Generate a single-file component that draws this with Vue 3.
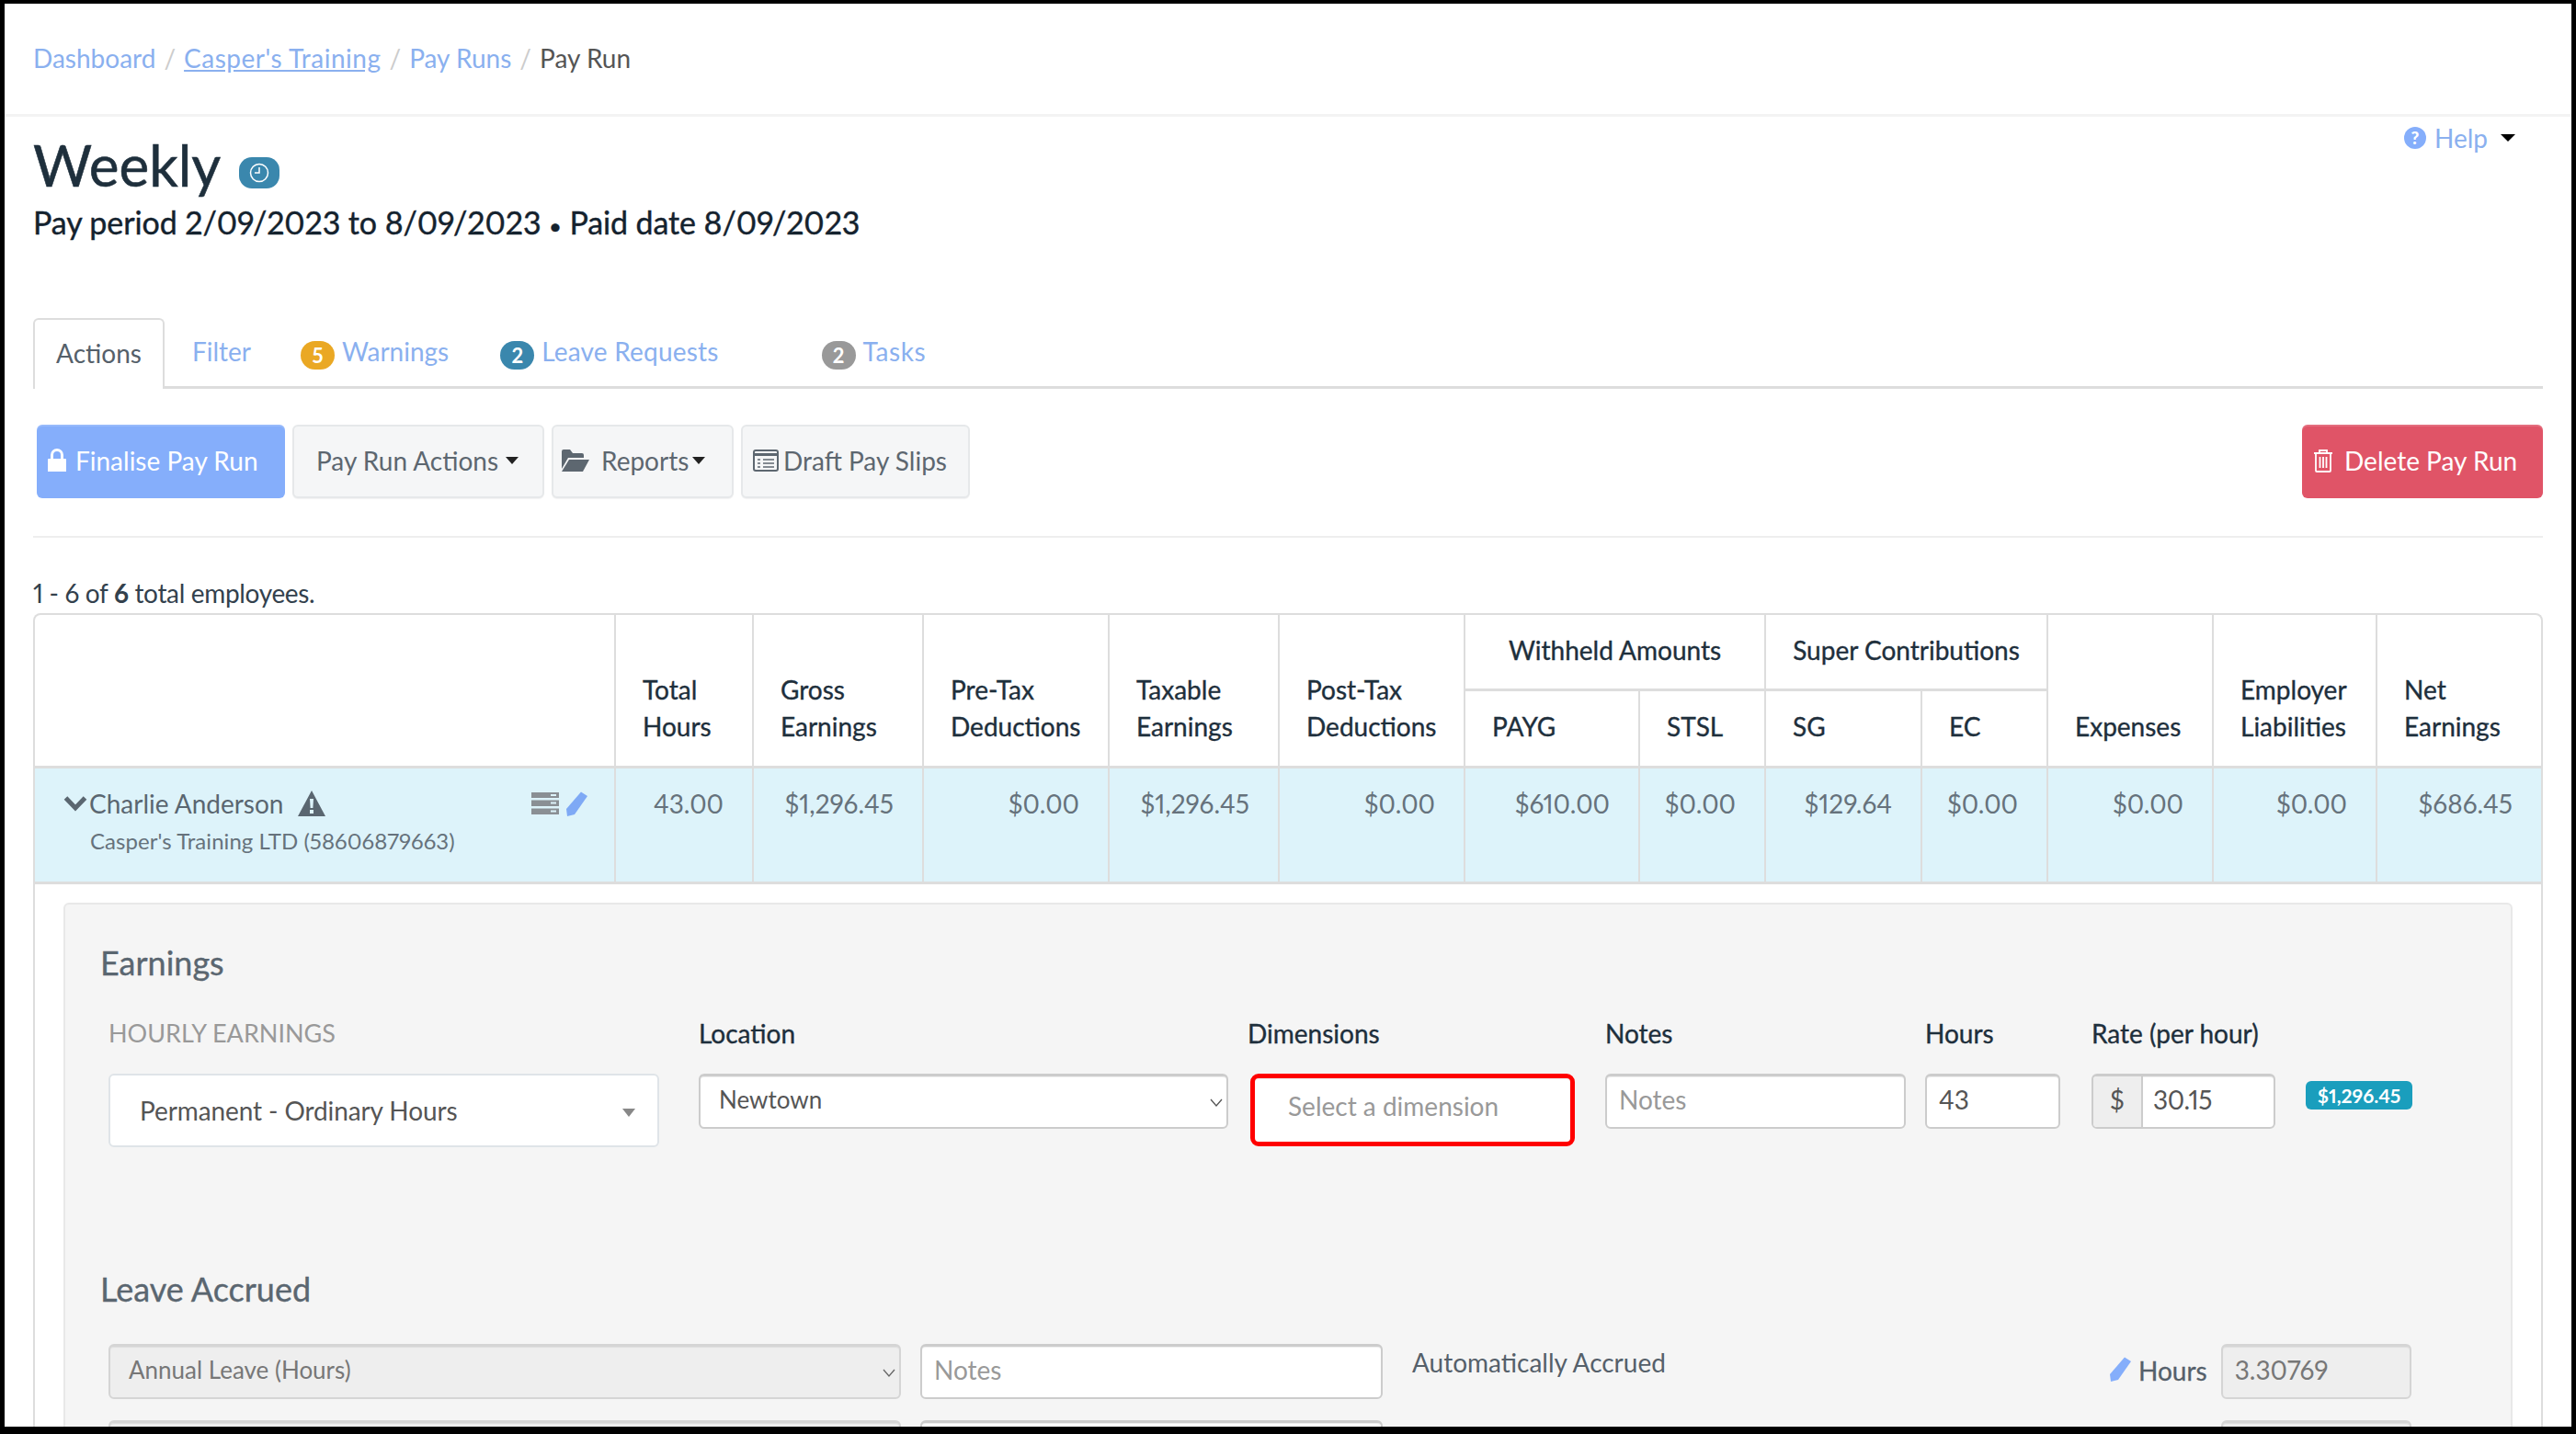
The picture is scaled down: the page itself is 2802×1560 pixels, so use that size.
<script setup>
const crumbs = ["Dashboard", "Casper's Training", "Pay Runs"]

const colWidths = [630, 150, 185, 202, 185, 202, 190, 137, 170, 137, 180, 178, 180]

const rowValues = [
  "43.00", "$1,296.45", "$0.00", "$1,296.45", "$0.00", "$610.00",
  "$0.00", "$129.64", "$0.00", "$0.00", "$0.00", "$686.45"
]

// second row sits under the bottom edge, only its top shows
const leaveRows = [
  { type: "Annual Leave (Hours)", notes: "Notes", hours: "3.30769" },
  { type: "", notes: "", hours: "" }
]
</script>

<template>
  <div class="frame">
    <div class="crumbs">
      <template v-for="(c, i) in crumbs" :key="c">
        <a class="crumb" :class="{ under: i === 1 }">{{ c }}</a>
        <span class="sep">/</span>
      </template>
      <span class="crumb-now">Pay Run</span>
    </div>

    <div class="main">
      <div class="title-row">
        <div>
          <h1>Weekly
            <span class="clock-badge">
              <svg width="24" height="24" viewBox="0 0 24 24" fill="none" stroke="#fff" stroke-width="1.5">
                <circle cx="12" cy="12" r="9.5" />
                <path d="M12 6v6H7" />
              </svg>
            </span>
          </h1>
          <div class="period">Pay period 2/09/2023 to 8/09/2023 <span class="dot">•</span> Paid date 8/09/2023</div>
        </div>
        <div class="help">
          <span class="q-icon">?</span>
          <span class="help-text">Help</span>
          <span class="caret dark"></span>
        </div>
      </div>

      <div class="tabs">
        <div class="tab active">Actions</div>
        <div class="tab filter">Filter</div>
        <div class="tab warn"><span class="pill amber">5</span>Warnings</div>
        <div class="tab leave"><span class="pill blue">2</span>Leave Requests</div>
        <div class="tab tasks"><span class="pill grey">2</span>Tasks</div>
      </div>

      <div class="actions">
        <button class="btn primary">
          <svg width="20" height="26" viewBox="0 0 20 26" fill="#fff">
            <path d="M3 11V7a7 7 0 0 1 14 0v4h2a1 1 0 0 1 1 1v13H0V12a1 1 0 0 1 1-1zm3 0h8V7a4 4 0 0 0-8 0z" />
          </svg>
          Finalise Pay Run
        </button>
        <button class="btn plain w-actions">Pay Run Actions <span class="caret"></span></button>
        <button class="btn plain w-reports">
          <svg width="30" height="26" viewBox="0 0 30 26" fill="#5d6770">
            <path d="M0 3a2 2 0 0 1 2-2h7l3 4h10a2 2 0 0 1 2 2v3H7L0 22z" />
            <path d="M8 12h22l-7 13H0z" />
          </svg>
          Reports <span class="caret"></span>
        </button>
        <button class="btn plain w-draft">
          <svg width="28" height="24" viewBox="0 0 28 24" fill="none" stroke="#5d6770" stroke-width="2">
            <rect x="1" y="1" width="26" height="22" rx="2" />
            <path d="M1 5.500h26" stroke-width="3" />
            <path d="M5 11h3M11 11h12M5 15h3M11 15h12M5 19h3M11 19h12" stroke-width="1.600" />
          </svg>
          Draft Pay Slips
        </button>
        <button class="btn danger">
          <svg width="22" height="26" viewBox="0 0 22 26" fill="none" stroke="#fff" stroke-width="1.800">
            <path d="M1 5h20M7 5V2h8v3M3 5v19a1 1 0 0 0 1 1h14a1 1 0 0 0 1-1V5" />
            <path d="M7.500 9v12M11 9v12M14.500 9v12" />
          </svg>
          Delete Pay Run
        </button>
      </div>

      <div class="count">1 - 6 of <b>6</b> total employees.</div>

      <div class="table-wrap">
        <table>
          <colgroup>
            <col v-for="(w, i) in colWidths" :key="i" :style="{ width: w + 'px' }" />
          </colgroup>
          <thead>
            <tr class="head-top">
              <th rowspan="2"></th>
              <th rowspan="2">Total<br />Hours</th>
              <th rowspan="2">Gross<br />Earnings</th>
              <th rowspan="2">Pre-Tax<br />Deductions</th>
              <th rowspan="2">Taxable<br />Earnings</th>
              <th rowspan="2">Post-Tax<br />Deductions</th>
              <th colspan="2" class="group">Withheld Amounts</th>
              <th colspan="2" class="group">Super Contributions</th>
              <th rowspan="2">Expenses</th>
              <th rowspan="2">Employer<br />Liabilities</th>
              <th rowspan="2">Net<br />Earnings</th>
            </tr>
            <tr class="head-sub">
              <th>PAYG</th>
              <th>STSL</th>
              <th>SG</th>
              <th>EC</th>
            </tr>
          </thead>
          <tbody>
            <tr class="employee">
              <td class="who">
                <div class="who-line">
                  <svg class="chevron" width="26" height="18" viewBox="0 0 26 18" fill="none" stroke="#5a6670" stroke-width="5">
                    <path d="M2.500 3 13 14 23.500 3" />
                  </svg>
                  <span class="name">Charlie Anderson</span>
                  <svg class="warn-icon" width="30" height="28" viewBox="0 0 30 28">
                    <path fill="#5a6670" fill-rule="evenodd" d="M15 0 30 28H0zM13 9l.6 10h2.800L17 9zm0 12v4h4v-4z" />
                  </svg>
                  <span class="who-icons">
                    <svg width="30" height="24" viewBox="0 0 30 24" fill="#8a8f94">
                      <path fill-rule="evenodd" d="M0 0h30v6H0zm21 2v2h6V2zM0 8.500h30v6.500H0zm21 2v2h6v-2zM0 17.500h30V24H0zm21 2v2h6v-2z" />
                    </svg>
                    <svg width="26" height="28" viewBox="0 0 26 28" fill="#7ea9f5">
                      <path d="M18 1.500 25 6 11 26 3 28l-1-8z" />
                    </svg>
                  </span>
                </div>
                <div class="company">Casper's Training LTD (58606879663)</div>
              </td>
              <td v-for="(v, i) in rowValues" :key="i" class="num">{{ v }}</td>
            </tr>
            <tr>
              <td colspan="13" class="detail">
                <div class="panel">
                  <h3>Earnings</h3>
                  <div class="earn-grid">
                    <div class="lbl muted">HOURLY EARNINGS</div>
                    <div class="lbl">Location</div>
                    <div class="lbl dims">Dimensions</div>
                    <div class="lbl">Notes</div>
                    <div class="lbl">Hours</div>
                    <div class="lbl">Rate (per hour)</div>
                    <div></div>

                    <div class="cell">
                      <div class="field big">Permanent - Ordinary Hours<span class="tri"></span></div>
                    </div>
                    <div class="cell">
                      <div class="field newtown">Newtown
                        <svg class="chev" width="14" height="9" viewBox="0 0 14 9" fill="none" stroke="#555" stroke-width="1.300"><path d="M1 1l6 7 6-7" /></svg>
                      </div>
                    </div>
                    <div class="cell">
                      <div class="field red">Select a dimension</div>
                    </div>
                    <div class="cell">
                      <div class="field ph">Notes</div>
                    </div>
                    <div class="cell">
                      <div class="field hours">43</div>
                    </div>
                    <div class="cell">
                      <div class="field rate"><span class="addon">$</span><span class="rate-val">30.15</span></div>
                    </div>
                    <div class="cell">
                      <span class="amount">$1,296.45</span>
                    </div>
                  </div>

                  <h3>Leave Accrued</h3>
                  <div v-for="(row, n) in leaveRows" :key="n" class="leave-row">
                    <div class="field disabled leave-type">
                      {{ row.type }}
                      <svg class="chev" width="14" height="9" viewBox="0 0 14 9" fill="none" stroke="#666" stroke-width="1.300"><path d="M1 1l6 7 6-7" /></svg>
                    </div>
                    <div class="field ph leave-notes">{{ row.notes }}</div>
                    <div class="auto">Automatically Accrued</div>
                    <svg class="edit" width="28" height="28" viewBox="0 0 26 28" fill="#85aefb">
                      <path d="M18 1.500 25 6 11 26 3 28l-1-8z" />
                    </svg>
                    <div class="hours-lbl">Hours</div>
                    <div class="field disabled leave-hours">{{ row.hours }}</div>
                  </div>
                </div>
              </td>
            </tr>
          </tbody>
        </table>
      </div>
    </div>
  </div>
</template>

<style>
html, body {
  margin: 0;
  background: #000;
}
</style>

<style scoped>
.frame {
  box-sizing: border-box;
  width: 2802px;
  height: 1560px;
  overflow: hidden;
  background: #fff;
  border-style: solid;
  border-color: #000;
  border-width: 4px 5px 8px 5px;
  font-family: Lato, "Liberation Sans", sans-serif;
  font-size: 28px;
  line-height: 40px;
  color: #55606a;
  font-variant-numeric: proportional-nums;
}

.crumbs {
  display: flex;
  align-items: center;
  box-sizing: border-box;
  height: 123px;
  padding: 0 0 3px 31px;
  border-bottom: 3px solid #f3f3f3;
}
.crumb { color: #8ab0ef; }
.crumb.under { text-decoration: underline; letter-spacing: .5px; }
.sep { color: #ccc; margin: 0 9px; }
.crumb-now { color: #555; }

.main { padding: 16px 31px 0; }

.title-row {
  display: flex;
  justify-content: space-between;
  align-items: flex-start;
}
h1 {
  margin: 0;
  font-size: 62px;
  line-height: 72px;
  font-weight: 400;
  -webkit-text-stroke: .6px #1e2f3c;
  color: #1e2f3c;
  display: flex;
  align-items: center;
  gap: 20px;
}
.clock-badge {
  display: inline-flex;
  align-items: center;
  justify-content: center;
  width: 44px;
  height: 34px;
  margin-top: 17px;
  border-radius: 14px;
  background: #3a87ad;
}
.period {
  margin-top: 5px;
  font-size: 34px;
  line-height: 44px;
  letter-spacing: -.1px;
  -webkit-text-stroke: .4px #14222e;
  color: #14222e;
}
.dot { font-size: 24px; }

.help {
  display: flex;
  align-items: center;
  gap: 9px;
  margin: -13px 30px 0 0;
  color: #8ab0ef;
}
.q-icon {
  width: 24px;
  height: 24px;
  border-radius: 50%;
  background: #85aefb;
  color: #fff;
  font-size: 19px;
  font-weight: 900;
  line-height: 24px;
  text-align: center;
}
.help-text { margin-right: 3px; }

.caret {
  display: inline-block;
  width: 0;
  height: 0;
  margin-left: 2px;
  vertical-align: middle;
  border-left: 7px solid transparent;
  border-right: 7px solid transparent;
  border-top: 8px solid #222;
}
.caret.dark {
  border-left-width: 8px;
  border-right-width: 8px;
  border-top-color: #000;
}

.tabs {
  display: flex;
  height: 77px;
  margin-top: 78px;
  border-bottom: 3px solid #ddd;
  box-sizing: border-box;
  color: #8ab0ef;
}
.tab {
  display: flex;
  align-items: center;
  height: 75px;
  padding-bottom: 4px;
  box-sizing: border-box;
}
.tab.active {
  width: 143px;
  height: 77px;
  justify-content: center;
  color: #55606a;
  background: #fff;
  border: 2px solid #ddd;
  border-bottom: 0;
  border-radius: 6px 6px 0 0;
}
.tab.filter { margin-left: 30px; }
.tab.warn { margin-left: 54px; }
.tab.leave { margin-left: 56px; }
.tab.tasks { margin-left: 112px; letter-spacing: .6px; }
.tab.leave { letter-spacing: .2px; }
.pill {
  width: 37px;
  height: 31px;
  margin: 10px 8px 0 0;
  border-radius: 16px;
  color: #fff;
  font-size: 22px;
  font-weight: 700;
  line-height: 31px;
  text-align: center;
  letter-spacing: 0;
}
.pill.amber { background: #eaa824; }
.pill.blue { background: #3a87ad; }
.pill.grey { background: #999; }

.actions {
  display: flex;
  gap: 8px;
  margin-top: 39px;
  padding: 0 0 41px 4px;
  border-bottom: 2px solid #eee;
}
.btn {
  display: flex;
  align-items: center;
  height: 80px;
  box-sizing: border-box;
  font: inherit;
  border-radius: 6px;
  padding: 0 0 3px;
  cursor: pointer;
}
.btn.primary {
  width: 270px;
  gap: 10px;
  padding-left: 12px;
  background: #85aefb;
  border: 0;
  color: #fff;
  box-shadow: inset 0 2px 0 rgba(255, 255, 255, .15);
}
.btn.plain {
  gap: 6px;
  background: #f5f6f7;
  border: 2px solid #e6e8ea;
  color: #5d6770;
  box-shadow: 0 1px 1px rgba(0, 0, 0, .05);
}
.w-actions { width: 274px; justify-content: center; padding-right: 2px; }
.w-reports { width: 198px; gap: 13px !important; padding-left: 9px; }
.w-reports .caret { margin-left: -9px; }
.w-draft { width: 249px; gap: 5px !important; padding-left: 11px; }
.btn.danger {
  width: 262px;
  margin-left: auto;
  gap: 12px;
  padding-left: 12px;
  background: #e05467;
  border: 0;
  color: #fff;
  box-shadow: inset 0 2px 0 rgba(255, 255, 255, .15);
}

.count {
  margin-top: 40px;
  margin-bottom: 2px;
  letter-spacing: -.33px;
  color: #33414d;
}
.count b { font-weight: 700; }

.table-wrap {
  width: 2730px;
  box-sizing: border-box;
  border: 2px solid #ddd;
  border-bottom: 0;
  border-radius: 8px 8px 0 0;
}
table {
  width: 2726px;
  table-layout: fixed;
  border-collapse: separate;
  border-spacing: 0;
}
th {
  padding: 0 0 23px 29px;
  text-align: left;
  vertical-align: bottom;
  font-weight: 400;
  -webkit-text-stroke: .35px #1e2f3c;
  color: #1e2f3c;
  border-left: 2px solid #ddd;
  border-bottom: 3px solid #ddd;
}
th:first-child { border-left: 0; }
.head-top { height: 83px; }
.head-sub { height: 84px; }
.head-sub th:first-child { border-left: 2px solid #ddd; }
th.group {
  padding: 0 0 5px;
  text-align: center;
  vertical-align: middle;
}
.employee td {
  height: 126px;
  box-sizing: border-box;
  padding: 18px 31px 0 0;
  vertical-align: top;
  background: #ddf3fa;
  border-left: 2px solid #ddd;
  border-bottom: 3px solid #ddd;
  color: #66727c;
}
.employee td.who {
  padding: 18px 28px 0 31px;
  border-left: 0;
}
.num { text-align: right; }
.who-line {
  display: flex;
  align-items: center;
  color: #5a6670;
}
.chevron { flex: none; margin-right: 2px; }
.name { margin-right: 15px; }
.who-icons {
  display: flex;
  align-items: center;
  gap: 6px;
  margin-left: auto;
}
.company {
  margin: 3px 0 0 29px;
  font-size: 24px;
  line-height: 36px;
  letter-spacing: .05px;
}

.detail {
  padding: 20px 31px 0;
}
.panel {
  box-sizing: border-box;
  padding: 41px 0 60px 47px;
  background: #f5f5f5;
  border: 2px solid #e8e8e8;
  border-radius: 6px;
}
h3 {
  margin: 0 0 0 -9px;
  font-size: 36px;
  line-height: 44px;
  font-weight: 400;
  -webkit-text-stroke: .35px #5a6670;
  color: #5a6670;
}
.earn-grid {
  display: grid;
  grid-template-columns: 642px 600px 386px 348px 181px 233px 116px;
  margin: 35px 0 132px;
}
.lbl {
  height: 64px;
  -webkit-text-stroke: .35px #1e2f3c;
  color: #1e2f3c;
}
.lbl.muted {
  font-size: 27px;
  -webkit-text-stroke: 0;
  color: #999;
}
.lbl.dims { margin-left: -3px; }
.cell { min-height: 80px; }
.field {
  position: relative;
  box-sizing: border-box;
  height: 60px;
  padding: 0 20px;
  background: #fff;
  border: 2px solid #ccc;
  border-top-width: 3px;
  border-radius: 6px;
  box-shadow: inset 0 1px 1px rgba(0, 0, 0, .075);
  line-height: 50px;
  color: #555;
}
.cell:nth-child(8) .field { width: 599px; }
.cell:nth-child(9) .field { width: 576px; }
.cell:nth-child(10) .field { width: 353px; }
.cell:nth-child(11) .field { width: 327px; }
.cell:nth-child(12) .field { width: 147px; }
.cell:nth-child(13) .field { width: 200px; }

.field.big {
  height: 80px;
  padding-left: 32px;
  border: 2px solid #dfe4e8;
  box-shadow: none;
  line-height: 76px;
  letter-spacing: -.1px;
}
.tri {
  position: absolute;
  right: 24px;
  top: 36px;
  width: 0;
  height: 0;
  border-left: 7px solid transparent;
  border-right: 7px solid transparent;
  border-top: 9px solid #888;
}
.chev {
  position: absolute;
  right: 4px;
  top: 24px;
}
.field.newtown { font-size: 26px; }
.field.red {
  height: 79px;
  padding-left: 36px;
  border: 5px solid #f00;
  border-radius: 9px;
  line-height: 60px;
  color: #999;
}
.field.ph { color: #999; padding-left: 13px; }
.field.hours { padding-left: 13px; }
.field.rate {
  display: flex;
  padding: 0;
  overflow: hidden;
}
.addon {
  width: 52px;
  flex: none;
  text-align: center;
  background: #eee;
  border-right: 2px solid #ccc;
}
.rate-val { padding-left: 11px; letter-spacing: -.4px; }
.amount {
  display: block;
  margin-top: 8px;
  height: 31px;
  border-radius: 6px;
  background: #1a9ebd;
  color: #fff;
  font-size: 21px;
  font-weight: 700;
  line-height: 31px;
  text-align: center;
}

.leave-row {
  display: flex;
  align-items: flex-start;
  margin-top: 38px;
  margin-bottom: -15px;
}
.field.disabled {
  background: #eee;
  color: #777;
  border-color: #d5d5d5;
}
.leave-type {
  flex: none;
  width: 862px;
  font-size: 26px;
}
.leave-notes { flex: none; width: 503px; margin-left: 21px; }
.auto { margin-left: 32px; width: 756px; flex: none; line-height: 40px; }
.edit { margin-top: 13px; flex: none; }
.hours-lbl { margin: 9px 15px 0 6px; -webkit-text-stroke: .3px #55606a; }
.leave-hours { flex: none; width: 207px; padding-left: 13px; }
</style>
